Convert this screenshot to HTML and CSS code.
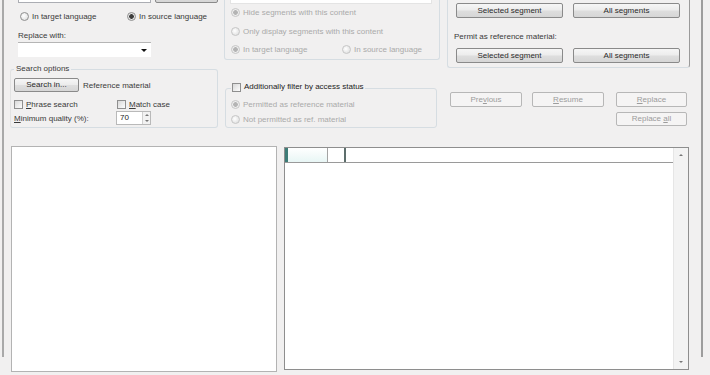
FILE: index.html
```html
<!DOCTYPE html>
<html lang="en">
<head>
    <meta charset="UTF-8">
    <title>Find and Replace</title>
    <link rel="stylesheet" href="styles.css">
</head>
<body>
    <div class="window">
        <div class="top">
            <!-- left column: find / replace -->
            <div class="col col-left">
                <div class="find-row">
                    <div class="textbox find-box"></div>
                    <button class="btn find-btn" aria-label="Find next"></button>
                </div>
                <div class="radio-row two">
                    <span class="opt"><i class="radio"></i>In target language</span>
                    <span class="opt"><i class="radio on"></i>In source language</span>
                </div>
                <div class="lbl">Replace with:</div>
                <div class="combo"><i class="drop"></i></div>

                <fieldset class="group search-opts">
                    <legend>Search options</legend>
                    <div class="search-row">
                        <button class="btn search-btn">Search in...</button>
                        <span>Reference material</span>
                    </div>
                    <div class="check-row">
                        <span class="opt"><i class="check"></i><u>P</u>hrase search</span>
                        <span class="opt"><i class="check"></i><u>M</u>atch case</span>
                    </div>
                    <div class="quality-row">
                        <span><u>M</u>inimum quality (%):</span>
                        <div class="spin">
                            <span class="spin-val">70</span>
                            <span class="spin-btns"><i class="up"></i><i class="down"></i></span>
                        </div>
                    </div>
                </fieldset>
            </div>

            <!-- middle column: filters -->
            <div class="col col-mid">
                <fieldset class="group filter off">
                    <div class="textbox filter-box"></div>
                    <div class="radio-row r1"><span class="opt"><i class="radio on"></i>Hide segments with this content</span></div>
                    <div class="radio-row r2"><span class="opt"><i class="radio"></i>Only display segments with this content</span></div>
                    <div class="radio-row r3 two">
                        <span class="opt"><i class="radio on"></i>In target language</span>
                        <span class="opt"><i class="radio"></i>In source language</span>
                    </div>
                </fieldset>

                <fieldset class="group access">
                    <legend><span class="opt"><i class="check"></i>Additionally filter by access status</span></legend>
                    <div class="radio-row off"><span class="opt"><i class="radio on"></i>Permitted as reference material</span></div>
                    <div class="radio-row off r5"><span class="opt"><i class="radio"></i>Not permitted as ref. material</span></div>
                </fieldset>
            </div>

            <!-- right column: reference material + actions -->
            <div class="col col-right">
                <fieldset class="group ref">
                    <div class="btn-pair">
                        <button class="btn wide">Selected segment</button>
                        <button class="btn wide">All segments</button>
                    </div>
                    <div class="lbl permit">Permit as reference material:</div>
                    <div class="btn-pair second">
                        <button class="btn wide">Selected segment</button>
                        <button class="btn wide">All segments</button>
                    </div>
                </fieldset>
                <div class="actions">
                    <button class="btn dim">Pre<u>v</u>ious</button>
                    <button class="btn dim"><u>R</u>esume</button>
                    <button class="btn dim"><u>R</u>eplace</button>
                    <button class="btn dim all">Replace <u>a</u>ll</button>
                </div>
            </div>
        </div>

        <div class="panels">
            <div class="panel list-panel"></div>
            <div class="panel grid-panel">
                <div class="grid-area">
                    <div class="grid-head">
                        <div class="hcell c1"></div>
                        <div class="hcell c2"></div>
                        <div class="hcell c3"></div>
                    </div>
                </div>
                <div class="vscroll">
                    <i class="sb-up"></i>
                    <i class="sb-down"></i>
                </div>
            </div>
        </div>
    </div>
</body>
</html>
```

FILE: styles.css
```css
* {
    box-sizing: border-box;
}
body {
    margin: 0;
    height: 375px;
    overflow: hidden;
    background-color: #f1f0f0;
    font-family: "Liberation Sans", Arial, sans-serif;
    font-size: 8px;
    color: #3a3a3a;
}
.window {
    margin-left: 2px;
    width: 701px;
    height: 375px;
    padding-left: 6px;
    border-left: 2px solid #a9a9a9;
    border-right: 2px solid #9d9d9d;
}
.top {
    display: grid;
    grid-template-columns: 208px 216px 244px;
    column-gap: 6px;
    margin-top: -18px;
    height: 164px;
}
.col-right {
    margin-left: 1px;
}

/* generic bits */
.textbox {
    background: #fff;
    border: 1px solid #abadb3;
}
.btn {
    font: inherit;
    color: #2a2a2a;
    height: 15px;
    padding: 0;
    line-height: 13px;
    border: 1px solid #8a8a8a;
    border-radius: 2px;
    background: linear-gradient(#f6f6f6, #ececec 48%, #dedede 52%, #d6d6d6);
}
.btn.dim {
    color: #9c9c9c;
    border-color: #b7b7b7;
    background: #f5f4f4;
}
.opt {
    display: inline-flex;
    align-items: center;
    white-space: nowrap;
}
.radio {
    display: inline-block;
    width: 9px;
    height: 9px;
    margin-right: 3px;
    border-radius: 50%;
    border: 1px solid #8f8f8f;
    background: radial-gradient(circle at 40% 40%, #fff, #d9d9d9);
}
.radio.on {
    background: radial-gradient(circle, #3c3c3c 0 2px, #e4e4e4 2.6px);
}
.check {
    display: inline-block;
    width: 9px;
    height: 9px;
    margin-right: 3px;
    border: 1px solid #8f8f8f;
    background: linear-gradient(135deg, #d8d8d8, #fdfdfd);
}
.off {
    color: #aaa;
}
.off .radio {
    border-color: #c6c6c6;
}
.off .radio.on {
    background: radial-gradient(circle, #b4b4b4 0 2px, #eee 2.6px);
}
.group {
    margin: 0;
    min-width: 0;
    border: 1px solid #d6dde2;
    border-radius: 3px;
}
legend {
    padding: 0 2px;
    line-height: 10px;
}

/* left column */
.col-left > .find-row,
.col-left > .radio-row,
.col-left > .lbl,
.col-left > .combo {
    margin-left: 8px;
}
.find-row {
    display: flex;
    gap: 4px;
    height: 21px;
}
.find-box {
    width: 134px;
    height: 21px;
}
.find-btn {
    width: 64px;
    height: 21px;
}
.radio-row {
    height: 12px;
    display: flex;
    align-items: center;
}
.col-left > .radio-row {
    margin-top: 7px;
    margin-left: 10px;
}
.radio-row.two {
    display: grid;
    grid-template-columns: 107px auto;
    align-items: center;
}
.lbl {
    margin-top: 8px;
    height: 11px;
    line-height: 11px;
}
.combo {
    margin-top: 1px;
    width: 133px;
    height: 15px;
    background: #fff;
    border-top: 1px solid #b5b5b5;
    display: flex;
    justify-content: flex-end;
    align-items: center;
    padding-right: 4px;
}
.drop {
    width: 0;
    height: 0;
    border-left: 3px solid transparent;
    border-right: 3px solid transparent;
    border-top: 3px solid #111;
}
.search-opts {
    margin-top: 7px;
    margin-left: 0;
    padding: 4px 0 2px 3px;
    height: 64px;
    border-left-color: #e2e2e2;
}
.search-row {
    display: flex;
    align-items: center;
    gap: 4px;
}
.search-btn {
    width: 65px;
    height: 14px;
    line-height: 12px;
}
.check-row {
    margin-top: 6px;
    height: 12px;
    display: grid;
    grid-template-columns: 103px auto;
    align-items: center;
}
.quality-row {
    margin-top: 1px;
    display: grid;
    grid-template-columns: 102px auto;
    align-items: center;
}
.spin {
    display: flex;
    width: 35px;
    height: 14px;
    border: 1px solid #b9b9b9;
    background: #fff;
}
.spin-val {
    flex: 1;
    padding-left: 3px;
    line-height: 12px;
    color: #222;
}
.spin-btns {
    width: 8px;
    display: flex;
    flex-direction: column;
    justify-content: space-around;
    align-items: center;
    border-left: 1px solid #d0d0d0;
    background: #f2f2f2;
}
.spin-btns .up,
.sb-up {
    width: 0;
    height: 0;
    border-left: 2px solid transparent;
    border-right: 2px solid transparent;
    border-bottom: 2px solid #777;
}
.spin-btns .down,
.sb-down {
    width: 0;
    height: 0;
    border-left: 2px solid transparent;
    border-right: 2px solid transparent;
    border-top: 2px solid #777;
}

/* middle column */
.filter {
    height: 78px;
    padding: 2px 7px 0 6px;
    border-top: none;
}
.filter-box {
    height: 20px;
    margin-left: -1px;
    border-color: #e4e4e4;
}
.filter .r1 {
    margin-top: 2px;
}
.filter .r2 {
    margin-top: 7px;
}
.filter .r3 {
    margin-top: 6px;
    grid-template-columns: 111px auto;
}
.access {
    margin-top: 22px;
    margin-left: 1px;
    width: 212px;
    height: 46px;
    padding: 4px 0 0 5px;
}
.access legend {
    color: #222;
    padding: 0 1px;
}
.access .r5 {
    margin-top: 3px;
}

/* right column */
.ref {
    height: 86px;
    padding: 21px 0 0 8px;
    border-top: none;
    border-right-color: #9a9a9a;
}
.btn-pair {
    display: flex;
    gap: 10px;
}
.btn.wide {
    width: 107px;
}
.permit {
    margin: 14px 0 0 -2px;
    height: 10px;
    line-height: 10px;
}
.btn-pair.second {
    margin-top: 6px;
}
.actions {
    margin: 24px 0 0 3px;
    display: grid;
    grid-template-columns: 72px 72px 71px;
    column-gap: 10px;
    row-gap: 5px;
}
.actions .btn {
    width: 100%;
}
.actions .btn:nth-child(3) {
    margin-left: 2px;
}
.actions .all {
    grid-column: 3;
    margin-left: 2px;
    height: 14px;
    line-height: 12px;
}

/* bottom panels */
.panels {
    display: flex;
    align-items: flex-start;
    gap: 7px;
}
.panel {
    background: #fff;
}
.list-panel {
    margin-left: 1px;
    width: 266px;
    height: 226px;
    border: 1px solid #b3b3b3;
}
.grid-panel {
    margin-top: 1px;
    width: 405px;
    height: 223px;
    border: 1px solid #8e8e8e;
    display: flex;
}
.grid-area {
    flex: 1;
}
.grid-head {
    display: flex;
    height: 15px;
    border-bottom: 1px solid #9a9a9a;
}
.hcell {
    height: 14px;
}
.c1 {
    width: 43px;
    border-left: 3px solid #3e7c77;
    border-right: 1px solid #a3a3a3;
    background: linear-gradient(#fff, #e8f6f5);
}
.c2 {
    width: 18px;
    border-right: 2px solid #5d6e6c;
}
.c3 {
    flex: 1;
}
.vscroll {
    width: 15px;
    background: #f3f3f3;
    border-left: 1px solid #e6e6e6;
    display: flex;
    flex-direction: column;
    justify-content: space-between;
    align-items: center;
    padding: 6px 0 6px;
}
```
